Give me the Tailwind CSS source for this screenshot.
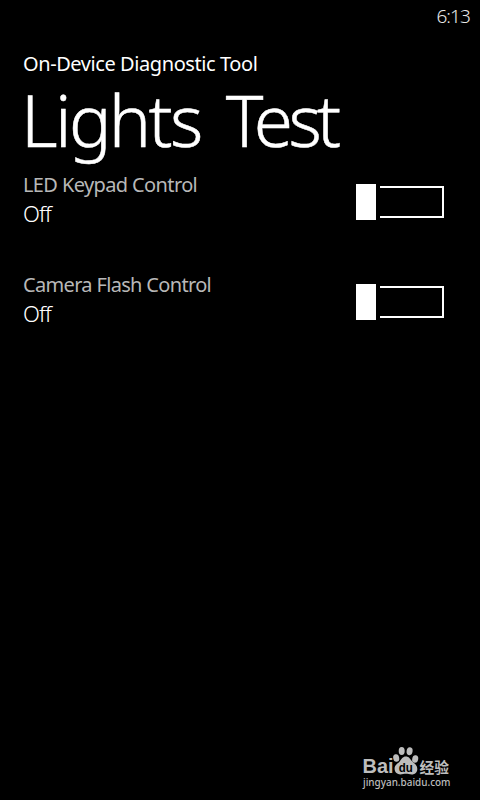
<!DOCTYPE html>
<html lang="en">
<head>
<meta charset="utf-8">
<title>Lights Test</title>
<script src="https://cdn.jsdelivr.net/npm/@tailwindcss/browser@4"></script>
</head>
<body class="bg-black">
<div class="flex h-[800px] w-[480px] flex-col overflow-hidden bg-black font-['Noto_Sans',sans-serif] text-white">
  <div class="flex h-[50px] justify-end pt-[2px] pr-[10px] text-[19px] leading-[28px] font-light tracking-[-0.9px] text-[#e8e8e8]">6:13</div>
  <header class="flex flex-col pl-[23px] whitespace-nowrap">
    <p class="h-[30px] text-[20px] leading-[28px] tracking-[-0.42px]">On-Device Diagnostic Tool</p>
    <h1 class="-ml-[2px] h-[90px] text-[71px] leading-[80px] font-light tracking-[-2.6px] [word-spacing:9px] [-webkit-text-stroke:0.5px_white]">Lights <span class="tracking-[-4.6px]">Test</span></h1>
  </header>
  <main class="flex flex-col">
    <section class="flex h-[100px] justify-between pr-[36px] pl-[23px]">
      <div class="pt-[1px]">
        <h2 class="text-[20px] leading-[28px] tracking-[-0.62px] text-[#b8b8b8]">LED Keypad Control</h2>
        <p class="text-[22px] leading-[28px] font-light tracking-[-0.8px]">Off</p>
      </div>
      <div class="mt-[14px] flex h-[36px] items-center gap-[4px]">
        <div class="h-[36px] w-[20px] bg-white"></div>
        <div class="h-[32px] w-[64px] border-2 border-l-0 border-white"></div>
      </div>
    </section>
    <section class="flex h-[100px] justify-between pr-[36px] pl-[23px]">
      <div class="pt-[1px]">
        <h2 class="text-[20px] leading-[28px] tracking-[-0.67px] text-[#b8b8b8]">Camera Flash Control</h2>
        <p class="text-[22px] leading-[28px] font-light tracking-[-0.8px]">Off</p>
      </div>
      <div class="mt-[14px] flex h-[36px] items-center gap-[4px]">
        <div class="h-[36px] w-[20px] bg-white"></div>
        <div class="h-[32px] w-[64px] border-2 border-l-0 border-white"></div>
      </div>
    </section>
  </main>
  <footer class="mt-auto flex justify-end pr-[20px] pb-[5px]">
    <svg width="110" height="60" viewBox="0 0 110 60" fill="#bdbdbd">
      <text x="12.500" y="38.300" font-family="Liberation Sans, sans-serif" font-weight="700" font-size="19.500" textLength="31" lengthAdjust="spacingAndGlyphs">Bai</text>
      <ellipse cx="46.200" cy="23" rx="3" ry="3.800" transform="rotate(-12 46.200 23)"/>
      <ellipse cx="51.700" cy="16" rx="3" ry="4"/>
      <ellipse cx="59.600" cy="16.200" rx="3" ry="4" transform="rotate(8 59.600 16.200)"/>
      <ellipse cx="65.200" cy="24" rx="3" ry="3.800" transform="rotate(12 65.200 24)"/>
      <path d="M55.800 21.500c-3.200 0-4.200 2.500-5.900 4.700-1.800 2.300-5.300 3.500-5.300 7.600 0 3.700 2.900 5.600 5.700 5.600 2.200 0 3.500-.6 5.600-.6s3.400.6 5.900.6c3.100 0 5.500-2.200 5.500-5.500 0-4.200-3.500-5.500-5.500-7.900-1.700-2.100-2.800-4.500-6-4.500Z"/>
      <text x="48.800" y="37" font-family="Liberation Sans, sans-serif" font-weight="700" font-size="12" fill="#000" textLength="14" lengthAdjust="spacingAndGlyphs">du</text>
      <text x="69.500" y="37.700" font-family="'Noto Sans CJK SC', sans-serif" font-weight="700" font-size="15" textLength="29.500" lengthAdjust="spacingAndGlyphs">经验</text>
      <text x="13" y="51" font-family="'Noto Sans', sans-serif" font-weight="500" font-size="10.500" textLength="87.500" lengthAdjust="spacingAndGlyphs">jingyan.baidu.com</text>
    </svg>
  </footer>
</div>
</body>
</html>
